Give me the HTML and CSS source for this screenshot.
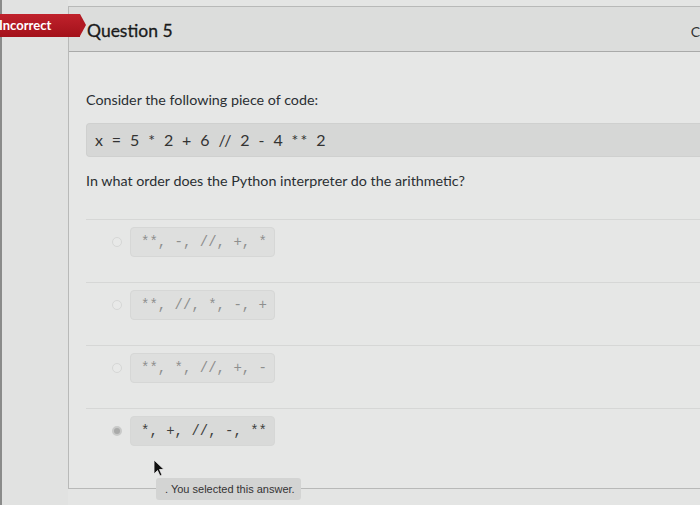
FILE: index.html
```html
<!DOCTYPE html>
<html>
<head>
<meta charset="utf-8">
<link rel="stylesheet" href="styles.css">
</head>
<body>
<div class="page">
  <div class="side"></div>
  <div class="card">
    <div class="card-head">
      <h2 class="q-title">Question 5</h2>
      <span class="q-pts">C</span>
    </div>
    <div class="card-body">
      <p class="prompt">Consider the following piece of code:</p>
      <div class="code">x = 5 * 2 + 6 // 2 - 4 ** 2</div>
      <p class="prompt prompt-2">In what order does the Python interpreter do the arithmetic?</p>
      <ul class="answers">
        <li class="answer"><span class="radio"></span><span class="opt">**, -, //, +, *</span></li>
        <li class="answer"><span class="radio"></span><span class="opt">**, //, *, -, +</span></li>
        <li class="answer"><span class="radio"></span><span class="opt">**, *, //, +, -</span></li>
        <li class="answer selected"><span class="radio"></span><span class="opt">*, +, //, -, **</span></li>
      </ul>
    </div>
  </div>
  <div class="badge">Incorrect</div>
  <svg class="cursor" width="12" height="18" viewBox="0 0 12 18"><path d="M1 1 L1 15 L4.5 11.5 L7 17 L9 16 L6.5 10.5 L11 10.5 Z" fill="#111" stroke="#eee" stroke-width="0.8"/></svg>
  <div class="tip">. You selected this answer.</div>
</div>
</body>
</html>
```
FILE: styles.css
```css
html, body {
  margin: 0;
  padding: 0;
}
body {
  background: #e4e5e4;
  font-family: Lato, "Noto Sans", sans-serif;
  color: #2d3b45;
  width: 700px;
  height: 505px;
  overflow: hidden;
}
.page {
  position: relative;
  display: flex;
  height: 505px;
  border-left: 2px solid #8a8b8a;
  box-sizing: border-box;
}
.side {
  width: 66px;
  flex: none;
  background: #e1e2e1;
}
.card {
  flex: 1;
  margin-top: 6px;
  height: 483px;
  border: 1px solid #b8b9b8;
  border-right: none;
  background: #e6e7e6;
  box-sizing: border-box;
}
.card-head {
  height: 44px;
  background: #dcdddc;
  border-bottom: 1px solid #a9aaa9;
  display: flex;
  align-items: center;
  justify-content: space-between;
  padding-left: 18px;
}
.q-title {
  margin: 0;
  font-size: 17.5px;
  font-weight: 400;
  color: #1a1a1a;
  padding-top: 3px;
  -webkit-text-stroke: 0.3px #1a1a1a;
}
.q-pts {
  font-size: 14px;
  color: #333;
  margin-right: 0;
  padding-top: 5px;
}
.card-body {
  padding: 39px 0 0 17px;
}
.prompt {
  margin: 0;
  font-size: 14.3px;
  line-height: 18px;
  color: #2a2f33;
}
.code {
  margin-top: 14px;
  height: 34px;
  background: #d6d7d6;
  border: 1px solid #cfd0cf;
  border-right: none;
  border-radius: 4px 0 0 4px;
  box-sizing: border-box;
  padding-left: 8px;
  font-size: 16px;
  line-height: 32px;
  letter-spacing: 2.15px;
  word-spacing: 0.5px;
  color: #333;
}
.prompt-2 {
  margin-top: 15px;
}
.answers {
  list-style: none;
  margin: 29px 0 0;
  padding: 0;
}
.answer {
  border-top: 1px solid #d6d7d6;
  height: 63px;
  display: flex;
  align-items: flex-start;
  padding-top: 7px;
  box-sizing: border-box;
}
.radio {
  width: 8px;
  height: 8px;
  border-radius: 50%;
  border: 1px solid #d6d7d6;
  background: #e8e9e8;
  margin: 10px 0 0 26px;
  flex: none;
}
.opt {
  margin-left: 8px;
  height: 30px;
  width: 145px;
  box-sizing: border-box;
  padding-left: 10px;
  background: #dedfde;
  border: 1px solid #d6d7d6;
  border-radius: 4px;
  font-family: "Liberation Mono", monospace;
  font-size: 14px;
  line-height: 28px;
  color: #8e8f8e;
  white-space: pre;
}
.selected .radio {
  background: #a9aaa9;
  border: 2px solid #c9cac9;
  width: 6px;
  height: 6px;
}
.selected .opt {
  color: #3e3f3e;
  background: #d9dad9;
}
.badge {
  position: absolute;
  left: -2px;
  top: 14px;
  height: 23px;
  width: 80px;
  background: linear-gradient(#c0222c, #a3111a);
  color: #fff;
  font-size: 13px;
  font-weight: 700;
  line-height: 23px;
  text-indent: -1px;
}
.badge::after {
  content: "";
  position: absolute;
  right: -6px;
  top: 0;
  border-left: 6px solid #b11a23;
  border-top: 11.5px solid transparent;
  border-bottom: 11.5px solid transparent;
}
.cursor {
  position: absolute;
  left: 151px;
  top: 459px;
}
.tip {
  position: absolute;
  left: 154px;
  top: 478px;
  height: 22px;
  padding: 0 6px 0 9px;
  background: #d3d4d3;
  border-radius: 3px;
  font-family: "Liberation Sans", sans-serif;
  font-size: 11px;
  line-height: 22px;
  color: #333;
}
```
